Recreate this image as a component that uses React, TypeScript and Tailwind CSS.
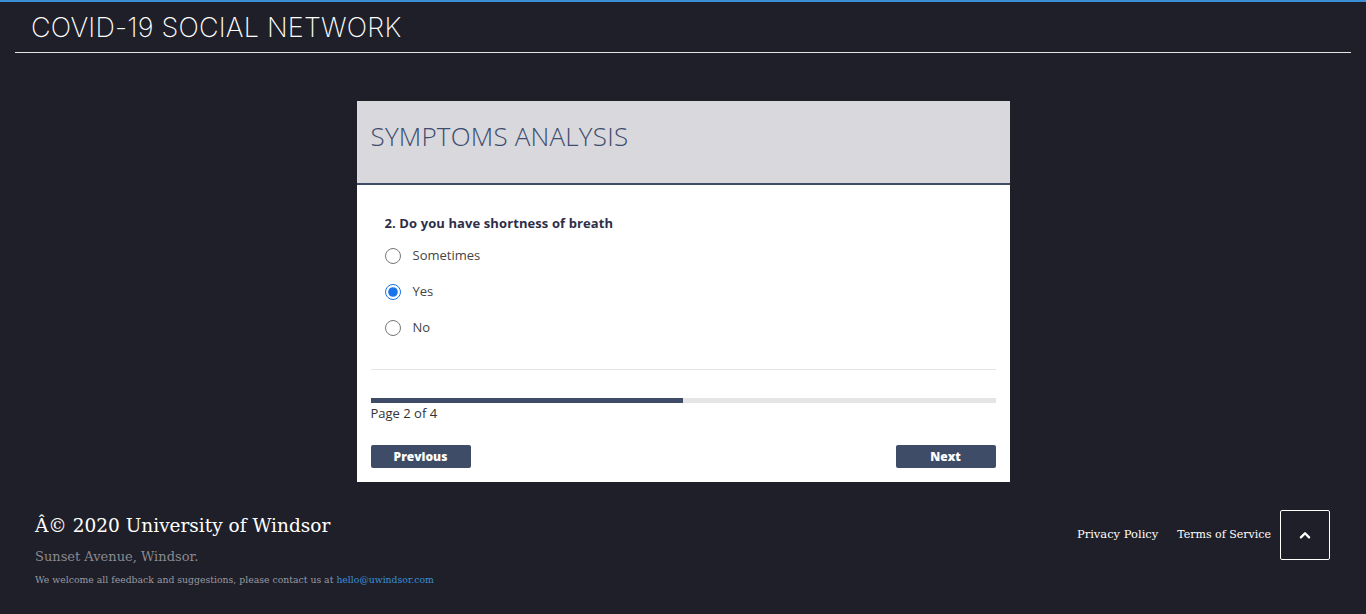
import React, { useState } from "react";

const options = ["Sometimes", "Yes", "No"];

function App() {
  const [answer, setAnswer] = useState("Yes");

  return (
    <div className="min-h-screen bg-[#1f1f29] border-t-2 border-[#3b8fd6] font-['Open_Sans',sans-serif]">
      {/* header */}
      <header className="px-[15px]">
        <div className="border-b border-[#e6e6e6] h-[51px] flex items-center pl-4">
          <h1 className="text-[27px] font-extralight text-white font-['Inter',sans-serif] leading-none tracking-[0.2px]">
            COVID-19 SOCIAL NETWORK
          </h1>
        </div>
      </header>

      {/* card */}
      <main className="flex justify-center pt-[48px]">
        <div className="w-[653px] bg-white">
          <div className="h-[84px] bg-[#d9d9dd] border-b-2 border-[#3e4c68] flex items-start pt-[17px] px-[14px]">
            <h2 className="text-[26px] font-light text-[#3e4c6e] font-['Open_Sans',sans-serif] tracking-[0.2px] leading-[36px]">
              SYMPTOMS ANALYSIS
            </h2>
          </div>
          <div className="px-[14px] pt-[29px] pb-[14px]">
            <div className="px-[14px]">
              <p className="text-[13px] font-bold text-[#2e2e48] leading-[18px] tracking-[0.1px]">
                2. Do you have shortness of breath
              </p>
              <div className="mt-[15px] flex flex-col gap-[18px]">
                {options.map((o) => (
                  <label key={o} className="flex items-center h-[18px] cursor-pointer">
                    <input
                      type="radio"
                      name="q2"
                      checked={answer === o}
                      onChange={() => setAnswer(o)}
                      className="w-4 h-4 m-0 accent-[#1a73e8]"
                    />
                    <span className="ml-[12px] text-[13px] text-[#444]">{o}</span>
                  </label>
                ))}
              </div>
            </div>
            <div className="mt-[32px] border-t border-[#e5e5e5]" />
            <div className="mt-[28px] h-[5px] bg-[#e5e5e5]">
              <div className="h-full bg-[#3e4c68]" style={{ width: "50%" }} />
            </div>
            <p className="mt-[1px] text-[13px] text-[#333] leading-[18px]">Page 2 of 4</p>
            <div className="mt-[23px] flex justify-between">
              <button className="w-[100px] h-[23px] bg-[#3e4c68] rounded-[2px] text-white text-[12px] font-extrabold">
                Previous
              </button>
              <button className="w-[100px] h-[23px] bg-[#3e4c68] rounded-[2px] text-white text-[12px] font-extrabold">
                Next
              </button>
            </div>
          </div>
        </div>
      </main>

      {/* footer */}
      <footer className="px-[35px] pt-[31px] pb-4 flex justify-between items-start font-['DejaVu_Serif',serif]">
        <div>
          <p className="text-[18.5px] text-white leading-[26px]">Â© 2020 University of Windsor</p>
          <p className="mt-[8px] text-[13px] text-[#8a8a8f] leading-[20px]">Sunset Avenue, Windsor.</p>
          <p className="mt-[6px] text-[9.3px] text-[#9a9aa0] leading-[14px]">
            We welcome all feedback and suggestions, please contact us at{" "}
            <a href="#" className="text-[#3b8fd6]">hello@uwindsor.com</a>
          </p>
        </div>
        <div className="flex items-center mr-[1px] mt-[-3px]">
          <a href="#" className="text-[11.5px] text-white">Privacy Policy</a>
          <a href="#" className="ml-[19px] text-[11px] text-white">Terms of Service</a>
          <button className="ml-[9px] w-[50px] h-[50px] border border-white rounded-[2px] flex items-center justify-center">
            <svg width="14" height="14" viewBox="0 0 24 24" fill="none" stroke="white" strokeWidth="4" strokeLinecap="round" strokeLinejoin="round">
              <path d="M5 16l7-7 7 7" />
            </svg>
          </button>
        </div>
      </footer>
    </div>
  );
}

export default App;
